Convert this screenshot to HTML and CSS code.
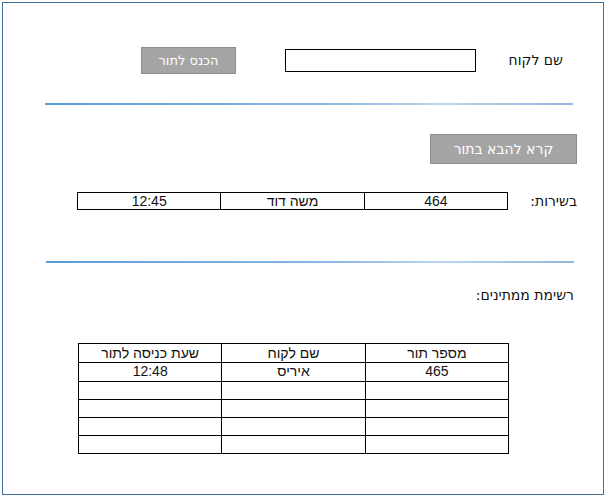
FILE: index.html
```html
<!DOCTYPE html>
<html lang="he" dir="rtl">
<head>
<meta charset="utf-8">
<title>תור</title>
<link rel="stylesheet" href="styles.css">
</head>
<body>
<div class="frame">
  <div class="row-enter">
    <span class="label">שם לקוח</span>
    <input class="name-input" type="text">
    <button class="btn btn-enter">הכנס לתור</button>
  </div>
  <div class="sep sep-1"></div>
  <button class="btn btn-next">קרא להבא בתור</button>
  <div class="row-service">
    <span class="label">בשירות:</span>
    <table class="grid">
      <tr><td>464</td><td>משה דוד</td><td>12:45</td></tr>
    </table>
  </div>
  <div class="sep sep-2"></div>
  <div class="waiting-title label">רשימת ממתינים:</div>
  <table class="grid waiting">
    <tr class="head"><td>מספר תור</td><td>שם לקוח</td><td>שעת כניסה לתור</td></tr>
    <tr><td>465</td><td>איריס</td><td>12:48</td></tr>
    <tr><td></td><td></td><td></td></tr>
    <tr><td></td><td></td><td></td></tr>
    <tr><td></td><td></td><td></td></tr>
    <tr><td></td><td></td><td></td></tr>
  </table>
</div>
</body>
</html>
```

FILE: styles.css
```css
html, body {
  margin: 0;
  padding: 0;
  background: #ffffff;
}

body {
  font-family: "Open Sans", "DejaVu Sans", sans-serif;
  color: #000;
}

.frame {
  margin: 2px;
  width: 600px;
  height: 491px;
  border: 1px solid #41719c;
  overflow: hidden;
}

.label {
  font-family: "DejaVu Sans", "Open Sans", sans-serif;
  font-size: 14px;
  line-height: 17px;
  color: #111;
  white-space: nowrap;
}

.row-enter {
  display: flex;
  align-items: center;
  height: 26px;
  margin-top: 44px;
  padding-right: 40px;
}

.row-enter .label {
  width: 38px;
}

.name-input {
  box-sizing: border-box;
  width: 191px;
  height: 23px;
  margin: 0 49px 0 0;
  border: 1px solid #000;
  padding: 0;
  outline: none;
}

.btn {
  box-sizing: border-box;
  background: #a5a5a5;
  border: 1px solid #8c8c8c;
  color: #fff;
  font-family: "DejaVu Sans", "Open Sans", sans-serif;
  font-size: 13px;
  padding: 0;
  display: block;
}

.btn-enter {
  width: 95px;
  height: 27px;
  margin-right: 49px;
}

.sep {
  height: 2px;
  background: linear-gradient(to right, #5b9bd5 0%, #8db8e2 55%, #bcd5ee 75%, #8fb6dd 100%);
}

.sep-1 {
  margin: 30px 30px 0 42px;
}

.btn-next {
  width: 147px;
  height: 30px;
  margin: 29px 26px 0 0;
  font-size: 14px;
}

.row-service {
  display: flex;
  align-items: center;
  margin-top: 28px;
  padding-right: 26px;
}

.row-service .label {
  width: 51px;
  margin-left: 18px;
}

.grid {
  border-collapse: collapse;
  width: 431px;
  font-family: "Liberation Sans", Arial, sans-serif;
  font-size: 14px;
  table-layout: fixed;
  color: #111;
}

.grid td {
  border: 1px solid #000;
  text-align: center;
  padding: 0;
  height: 16px;
  line-height: 16px;
}

.sep-2 {
  margin: 51px 29px 0 43px;
}

.waiting-title {
  margin-top: 24px;
  padding-right: 29px;
}

.waiting {
  margin: 39px 94px 0 0;
}

.waiting td {
  height: 17px;
  line-height: 17px;
}

.waiting .head td {
  height: 18px;
}

.waiting tr:nth-child(2) td,
.waiting tr:last-child td {
  height: 17.5px;
}
```
